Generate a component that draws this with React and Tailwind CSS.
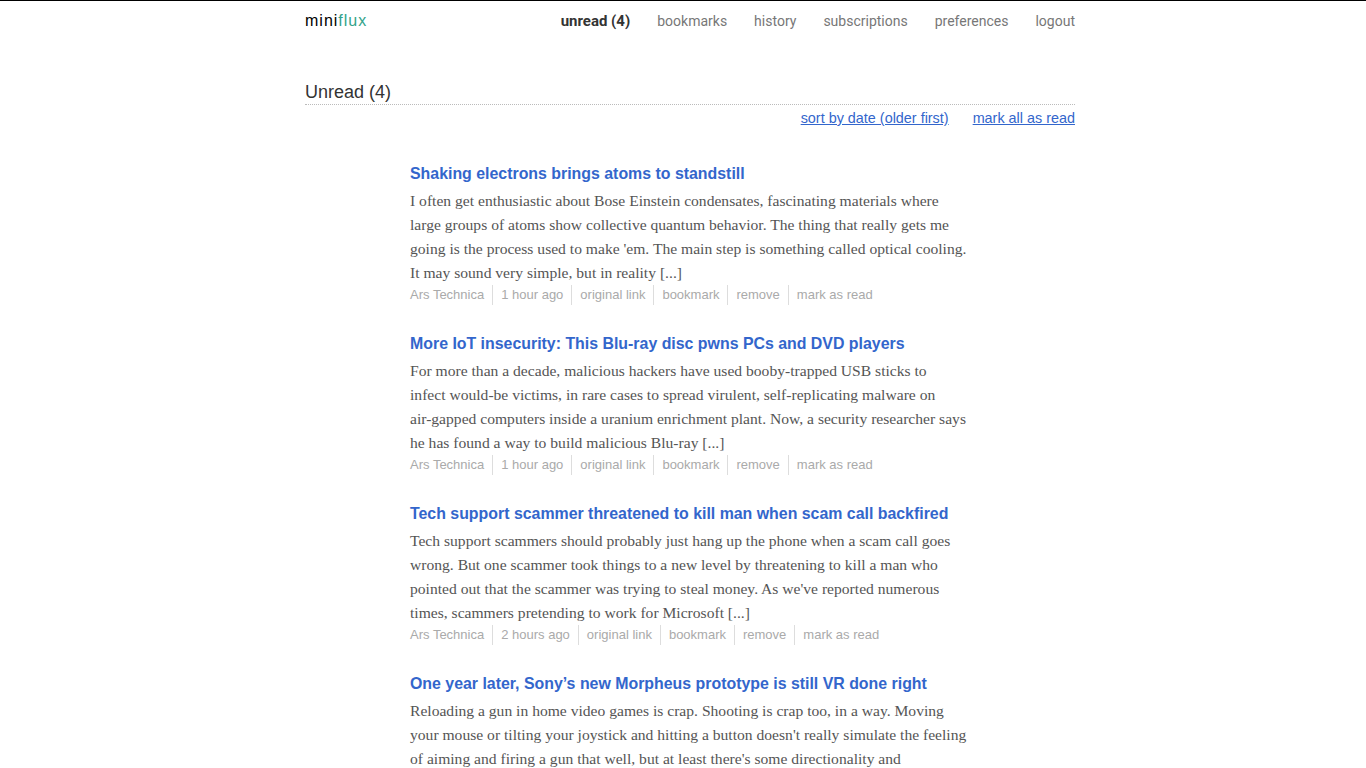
const items = [
  {
    title: 'Shaking electrons brings atoms to standstill',
    body: "I often get enthusiastic about Bose Einstein condensates, fascinating materials where large groups of atoms show collective quantum behavior. The thing that really gets me going is the process used to make 'em. The main step is something called optical cooling. It may sound very simple, but in reality [...]",
    age: '1 hour ago',
  },
  {
    title: 'More IoT insecurity: This Blu-ray disc pwns PCs and DVD players',
    body: (
      <>
        For more than a decade, malicious hackers have used booby-trapped USB sticks to{' '}
        <span className="whitespace-nowrap">infect would-be</span> victims, in rare cases to spread virulent,
        self-replicating malware on <span className="whitespace-nowrap">air-gapped</span> computers inside a uranium
        enrichment plant. Now, a security researcher says he has found a way to build malicious Blu-ray [...]
      </>
    ),
    age: '1 hour ago',
  },
  {
    title: 'Tech support scammer threatened to kill man when scam call backfired',
    body: "Tech support scammers should probably just hang up the phone when a scam call goes wrong. But one scammer took things to a new level by threatening to kill a man who pointed out that the scammer was trying to steal money. As we've reported numerous times, scammers pretending to work for Microsoft [...]",
    age: '2 hours ago',
  },
  {
    title: 'One year later, Sony\u2019s new Morpheus prototype is still VR done right',
    body: "Reloading a gun in home video games is crap. Shooting is crap too, in a way. Moving your mouse or tilting your joystick and hitting a button doesn't really simulate the feeling of aiming and firing a gun that well, but at least there's some directionality and responsiveness to it [...]",
    age: '3 hours ago',
  },
];

const nav = ['bookmarks', 'history', 'subscriptions', 'preferences', 'logout'];

function Item({ item }) {
  const meta = ['Ars Technica', item.age, 'original link', 'bookmark', 'remove', 'mark as read'];
  return (
    <article className="mb-[27px]">
      <h2 className="text-[15.9px] font-bold leading-[24px] text-[#3366cc] font-['Liberation_Sans',Arial,sans-serif]">
        <a href="#">{item.title}</a>
      </h2>
      <p className="mt-[3px] text-[15.6px] leading-[24px] text-[#555] font-['Liberation_Serif','Times_New_Roman',serif]">
        {item.body}
      </p>
      <ul className="flex text-[13px] leading-[20px] text-[#aaa] font-['Liberation_Sans',Arial,sans-serif]">
        {meta.map((m, i) => (
          <li key={i} className={i === 0 ? 'pr-2' : 'border-l border-[#ddd] px-2'}>
            {m}
          </li>
        ))}
      </ul>
    </article>
  );
}

export default function App() {
  return (
    <div className="min-h-screen bg-white border-t border-black">
      <div className="w-[784px] mx-auto pl-[14px]">
        <header className="flex items-center justify-between h-[40px] font-['Roboto',sans-serif]">
          <div className="text-[16px] tracking-[1px] text-black font-['Liberation_Sans',Arial,sans-serif]">
            mini<span className="text-[#33a38a]">flux</span>
          </div>
          <nav className="flex items-center gap-[27px] text-[14px] text-[#777]">
            <a href="#" className="font-bold text-[15px] text-[#333]">unread (4)</a>
            {nav.map((n) => (
              <a key={n} href="#">{n}</a>
            ))}
          </nav>
        </header>

        <div className="mt-[39px] border-b border-dotted border-[#bbb]">
          <h1 className="text-[18px] leading-[24px] text-[#333] font-['Liberation_Sans',Arial,sans-serif]">Unread (4)</h1>
        </div>
        <div className="flex justify-end gap-6 mt-[4px] text-[14.4px] leading-[18px] text-[#3366cc] font-['Liberation_Sans',Arial,sans-serif]">
          <a href="#" className="underline">sort by date (older first)</a>
          <a href="#" className="underline">mark all as read</a>
        </div>

        <section className="w-[562px] ml-[105px] mt-[35px]">
          {items.map((it, i) => (
            <Item key={i} item={it} />
          ))}
        </section>
      </div>
    </div>
  );
}
